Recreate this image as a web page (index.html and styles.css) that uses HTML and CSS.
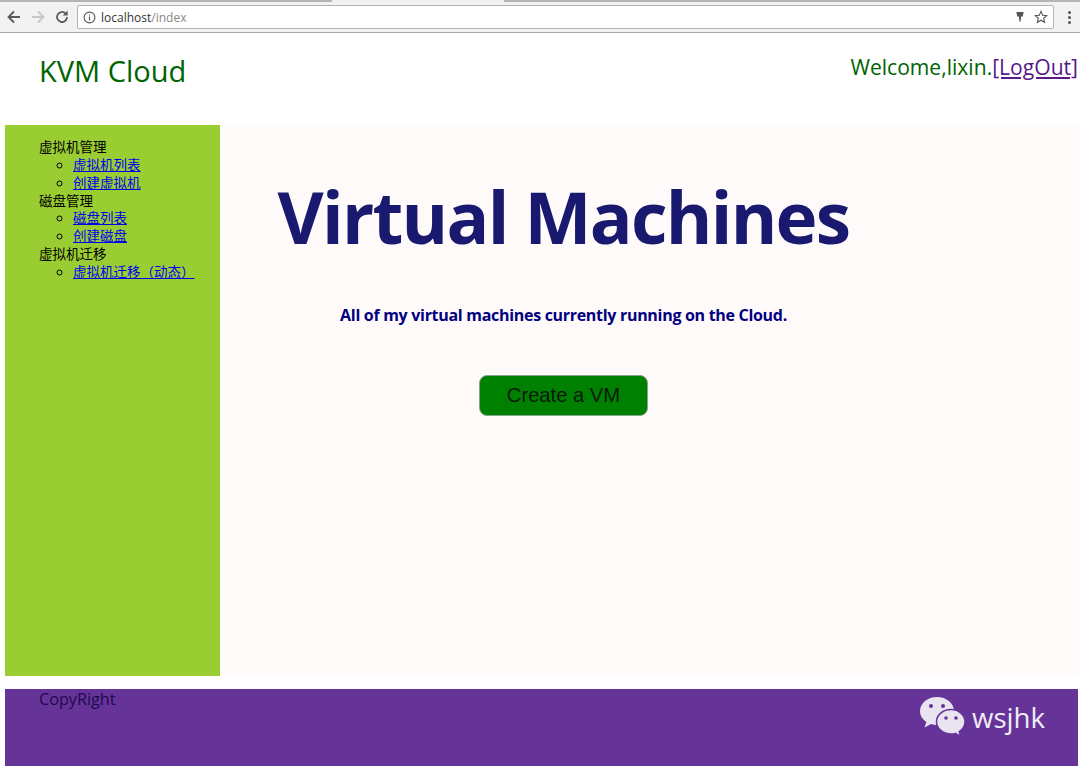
FILE: index.html
```html
<!DOCTYPE html>
<html lang="zh">
<head>
    <meta charset="UTF-8">
    <meta name="viewport" content="width=device-width, initial-scale=1.0">
    <title>KVM Cloud</title>
    <link rel="stylesheet" href="styles.css">
</head>
<body>
    <!-- browser chrome -->
    <div class="tabstrip">
        <div class="tab tab-a"></div>
        <div class="tab tab-b"></div>
    </div>
    <div class="toolbar">
        <svg class="nav-icon" width="16" height="16" viewBox="0 0 16 16"><path d="M14 8H3M8 2.500 2.500 8 8 13.500" fill="none" stroke="#5a5a5a" stroke-width="1.800"/></svg>
        <svg class="nav-icon" width="16" height="16" viewBox="0 0 16 16"><path d="M2 8h11M8 2.500 13.500 8 8 13.500" fill="none" stroke="#c8c8c8" stroke-width="1.800"/></svg>
        <svg class="nav-icon" width="16" height="16" viewBox="0 0 16 16"><path d="M13 8a5 5 0 1 1-1.600-3.700" fill="none" stroke="#5a5a5a" stroke-width="1.800"/><path d="M13.600 1.500v5h-5z" fill="#5a5a5a"/></svg>
        <div class="address">
            <svg width="13" height="13" viewBox="0 0 13 13"><circle cx="6.500" cy="6.500" r="5.400" fill="none" stroke="#555" stroke-width="1.100"/><path d="M6.500 5.600v3.800M6.500 3.400v1.200" stroke="#555" stroke-width="1.200"/></svg>
            <span class="host">localhost<span class="path">/index</span></span>
            <svg class="addr-right" width="10" height="12" viewBox="0 0 10 12"><path d="M1.500 1h7v2H8v2.500H6V7L5.400 11H4.600L4 7V5.500H2V3h-.5z" fill="#555"/></svg>
            <svg width="14" height="14" viewBox="0 0 14 14"><path d="M7 1.400 8.700 5.200l4.100.4-3.100 2.700.9 4-3.600-2.100-3.600 2.100.9-4L1.200 5.600l4.100-.4z" fill="none" stroke="#555" stroke-width="1.100"/></svg>
        </div>
        <div class="menu-dots"><i></i><i></i><i></i></div>
    </div>

    <div class="header">
        <h2 class="brand">KVM Cloud</h2>
        <div class="welcome">Welcome,lixin.<a href="#">[LogOut]</a></div>
    </div>

    <div class="middle">
        <div class="sidebar">
            <ul class="menu">
                <li>虚拟机管理
                    <ul>
                        <li><a href="#">虚拟机列表</a></li>
                        <li><a href="#">创建虚拟机</a></li>
                    </ul>
                </li>
                <li>磁盘管理
                    <ul>
                        <li><a href="#">磁盘列表</a></li>
                        <li><a href="#">创建磁盘</a></li>
                    </ul>
                </li>
                <li>虚拟机迁移
                    <ul>
                        <li><a href="#">虚拟机迁移（动态）</a></li>
                    </ul>
                </li>
            </ul>
        </div>
        <div class="content">
            <h1>Virtual Machines</h1>
            <p class="lead">All of my virtual machines currently running on the Cloud.</p>
            <button class="create-btn">Create a VM</button>
        </div>
    </div>

    <div class="footer">
        <span class="copyright">CopyRight</span>
        <div class="mark">
            <svg width="48" height="42" viewBox="0 0 48 42">
                <path d="M18 1C8.600 1 1 7.300 1 15c0 4.500 2.500 8.400 6.400 11L5.500 31.500l6.600-3.400c1.900.6 3.900.9 5.900.9 9.400 0 17-6.300 17-14S27.400 1 18 1z" fill="#e9e4f0"/>
                <path d="M32 13.500c-8 0-14.500 5.500-14.500 12.200S24 38 32 38c1.600 0 3.100-.2 4.500-.6l5.200 3-1.500-4.800c3.500-2.300 5.800-6 5.800-9.900 0-6.700-6.200-12.200-14-12.200z" fill="#e9e4f0" stroke="#663399" stroke-width="1.500"/>
                <circle cx="12" cy="10" r="2" fill="#663399"/>
                <circle cx="24" cy="10" r="2" fill="#663399"/>
                <circle cx="27" cy="22" r="1.800" fill="#663399"/>
                <circle cx="37" cy="22" r="1.800" fill="#663399"/>
            </svg>
            <span class="mark-name">wsjhk</span>
        </div>
    </div>
</body>
</html>
```

FILE: styles.css
```css
* {
    margin: 0;
    padding: 0;
    box-sizing: border-box;
}

body {
    background: #fff;
    font-family: "Open Sans", "Noto Sans CJK SC", sans-serif;
    overflow: hidden;
}

/* browser chrome */
.tabstrip {
    height: 2px;
    display: flex;
    background: #f2f2f2;
}

.tab {
    height: 2px;
    background: #b5b5b5;
}

.tab-a {
    width: 332px;
}

.tab-b {
    width: 576px;
    margin-left: 172px;
}

.toolbar {
    height: 31px;
    background: #f2f2f2;
    border-bottom: 1px solid #a9a9a9;
    display: flex;
    align-items: center;
    padding: 0 4px 0 6px;
}

.nav-icon {
    margin-right: 8px;
}

.address {
    width: 977px;
    height: 24px;
    margin-left: -1px;
    background: #fff;
    border: 1px solid #b4b4b4;
    border-radius: 2px;
    display: flex;
    align-items: center;
    gap: 5px;
    padding: 0 5px;
    font-size: 12px;
    color: #333;
}

.path {
    color: #888;
}

.addr-right {
    margin-left: auto;
    margin-right: 4px;
}

.menu-dots {
    display: flex;
    flex-direction: column;
    gap: 2px;
    margin-left: 14px;
}

.menu-dots i {
    display: block;
    width: 3px;
    height: 3px;
    border-radius: 50%;
    background: #555;
}

/* page */
.header {
    height: 92px;
    display: flex;
    justify-content: space-between;
    padding: 0 2px 0 39px;
    color: #006400;
}

.brand {
    font-size: 29px;
    font-weight: 400;
    margin-top: 18px;
}

.welcome {
    font-size: 21.1px;
    margin-top: 19px;
}

.welcome a {
    color: #551a8b;
}

.middle {
    display: flex;
    height: 551px;
    margin-left: 5px;
}

.sidebar {
    width: 215px;
    background: #9acd32;
    padding-top: 14px;
    font-size: 13.5px;
    line-height: 17.85px;
}

.menu {
    list-style: none;
    padding-left: 34px;
}

.menu ul {
    list-style: circle;
    padding-left: 34px;
}

.menu a {
    color: #0000ee;
}

.content {
    flex: 1;
    background: #fffafa;
    display: flex;
    flex-direction: column;
    align-items: center;
    padding-right: 173px;
}

.content h1 {
    font-size: 71px;
    font-weight: 700;
    letter-spacing: -1.700px;
    color: #191970;
    margin-top: 43px;
}

.lead {
    font-size: 16px;
    font-weight: 700;
    letter-spacing: -0.300px;
    color: #000080;
    margin-top: 39px;
}

.create-btn {
    width: 169px;
    height: 41px;
    margin-top: 49px;
    background: #008000;
    border: 1px solid #88a488;
    border-radius: 8px;
    font-family: "Liberation Sans", sans-serif;
    font-size: 20.2px;
    color: #0a1a0a;
}

.footer {
    height: 77px;
    margin: 13px 2px 0 5px;
    background: #663399;
    display: flex;
    justify-content: space-between;
    padding: 0 33px 0 34px;
}

.copyright {
    font-size: 16.2px;
    line-height: 21px;
    color: #1d0a4d;
}

.mark {
    display: flex;
    align-items: center;
    height: 56px;
    gap: 5px;
}

.mark-name {
    font-size: 27.6px;
    color: #f0ecf5;
}
```
